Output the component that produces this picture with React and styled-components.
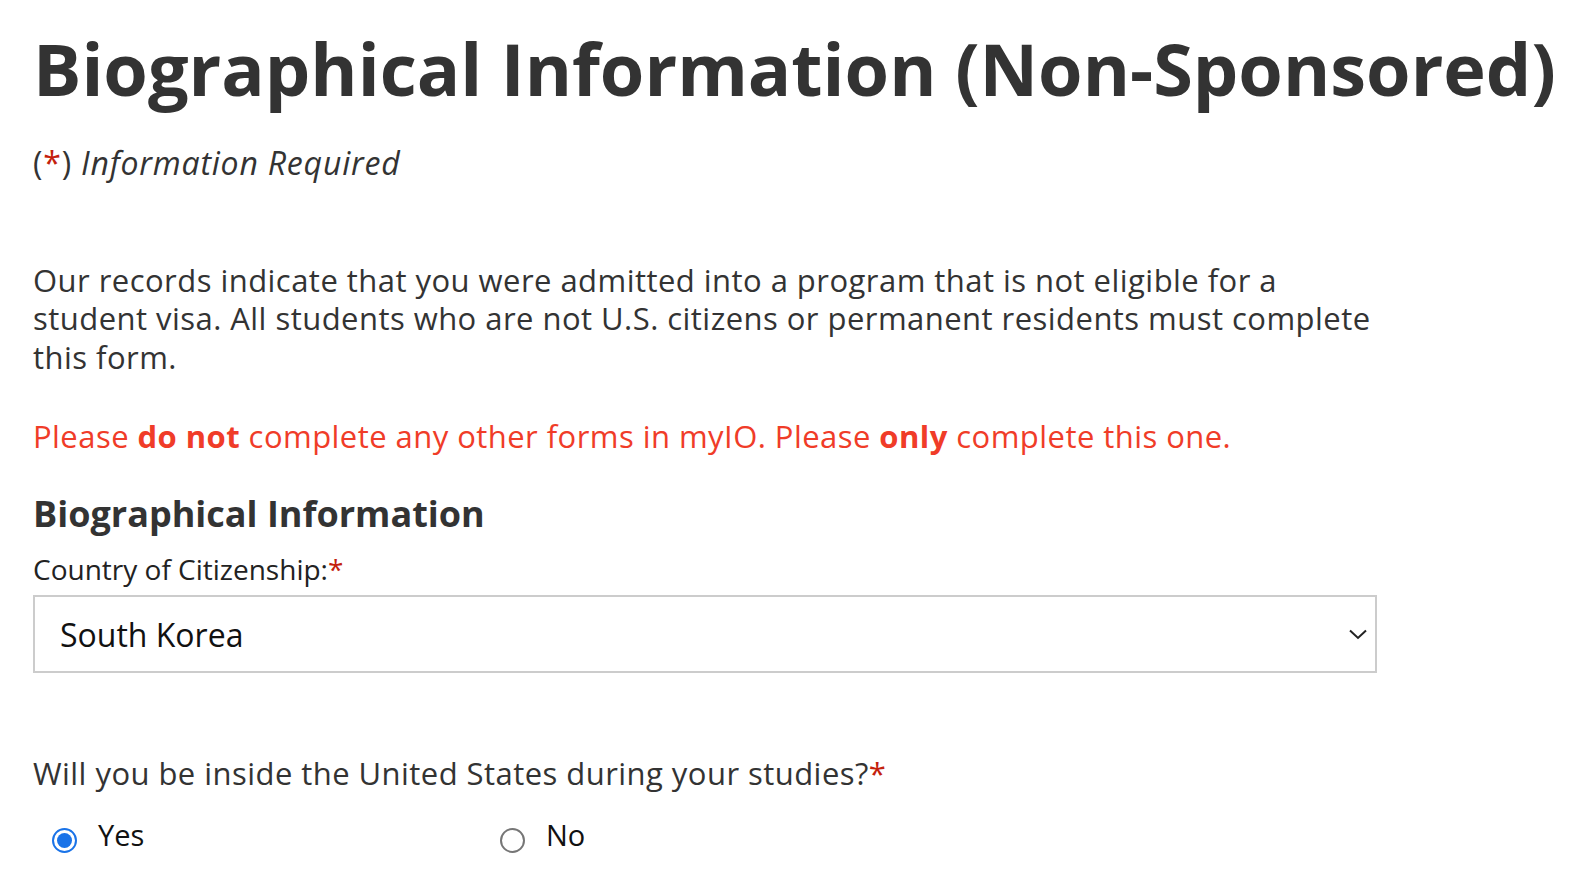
import React from "react";
import styled, { createGlobalStyle } from "styled-components";

const GlobalStyle = createGlobalStyle`
  html, body {
    margin: 0;
    padding: 0;
    background: #fff;
  }
  body {
    font-family: "Open Sans", "Liberation Sans", sans-serif;
    color: #333;
  }
`;

const Page = styled.div`
  padding: 20px 33px 0 33px;
  width: 1584px;
  box-sizing: border-box;
`;

const Title = styled.h1`
  margin: 0;
  font-size: 72px;
  line-height: 96px;
  font-weight: 700;
  color: #333;
  white-space: nowrap;
`;

const Required = styled.p`
  margin: 27px 0 0 0;
  font-size: 32px;
  line-height: 40px;
  letter-spacing: 0.8px;
  color: #333;
  em {
    font-style: italic;
  }
`;

const Star = styled.span`
  color: #c4210c;
`;

const Body = styled.p`
  margin: 78px 0 0 0;
  width: 1356px;
  font-size: 31px;
  line-height: 38.4px;
  letter-spacing: 0.46px;
  color: #333;
`;

const Warning = styled.p`
  margin: 40px 0 0 0;
  font-size: 31px;
  line-height: 40px;
  letter-spacing: 0.45px;
  color: #f03c28;
  b {
    font-weight: 700;
  }
`;

const SectionTitle = styled.h2`
  margin: 35px 0 0 0;
  font-size: 36px;
  line-height: 46px;
  font-weight: 700;
  color: #333;
`;

const Label = styled.label`
  display: block;
  margin-top: 12px;
  font-size: 28px;
  line-height: 40px;
  color: #222;
`;

const SelectBox = styled.div`
  margin-top: 6px;
  width: 1344px;
  height: 78px;
  box-sizing: border-box;
  border: 2px solid #ccc;
  display: flex;
  align-items: center;
  justify-content: space-between;
  padding: 0 6px 0 25px;
  font-size: 32px;
  color: #111;
`;

const Question = styled.div`
  margin-top: 80px;
  font-size: 31px;
  line-height: 40px;
  letter-spacing: 0.45px;
  color: #333;
`;

const RadioRow = styled.div`
  display: flex;
  margin-top: 22px;
  padding-left: 19px;
`;

const RadioItem = styled.label`
  display: flex;
  align-items: center;
  width: 448px;
  font-size: 29px;
  line-height: 40px;
  color: #111;
`;

const RadioDot = styled.span`
  width: 25px;
  height: 25px;
  box-sizing: border-box;
  border-radius: 50%;
  border: ${(p) => (p.checked ? "2px solid #1a73e8" : "2px solid #767676")};
  margin: 10px 21px 0 0;
  display: flex;
  align-items: center;
  justify-content: center;
  &::after {
    content: "";
    display: ${(p) => (p.checked ? "block" : "none")};
    width: 15px;
    height: 15px;
    border-radius: 50%;
    background: #1a73e8;
  }
`;

const Chevron = () => (
  <svg width="22" height="22" viewBox="0 0 22 22" fill="none">
    <path d="M3 7.5 L11 15 L19 7.5" stroke="#222" strokeWidth="2" />
  </svg>
);

export default function App() {
  return (
    <Page>
      <GlobalStyle />
      <Title>Biographical Information (Non-Sponsored)</Title>
      <Required>
        (<Star>*</Star>) <em>Information Required</em>
      </Required>
      <Body>
        Our records indicate that you were admitted into a program that is not eligible for a
        student visa. All students who are not U.S. citizens or permanent residents must complete
        this form.
      </Body>
      <Warning>
        Please <b>do not</b> complete any other forms in myIO. Please <b>only</b> complete this one.
      </Warning>
      <SectionTitle>Biographical Information</SectionTitle>
      <Label>
        Country of Citizenship:<Star>*</Star>
      </Label>
      <SelectBox>
        <span>South Korea</span>
        <Chevron />
      </SelectBox>
      <Question>
        Will you be inside the United States during your studies?<Star>*</Star>
      </Question>
      <RadioRow>
        <RadioItem>
          <RadioDot checked />
          Yes
        </RadioItem>
        <RadioItem>
          <RadioDot />
          No
        </RadioItem>
      </RadioRow>
    </Page>
  );
}
